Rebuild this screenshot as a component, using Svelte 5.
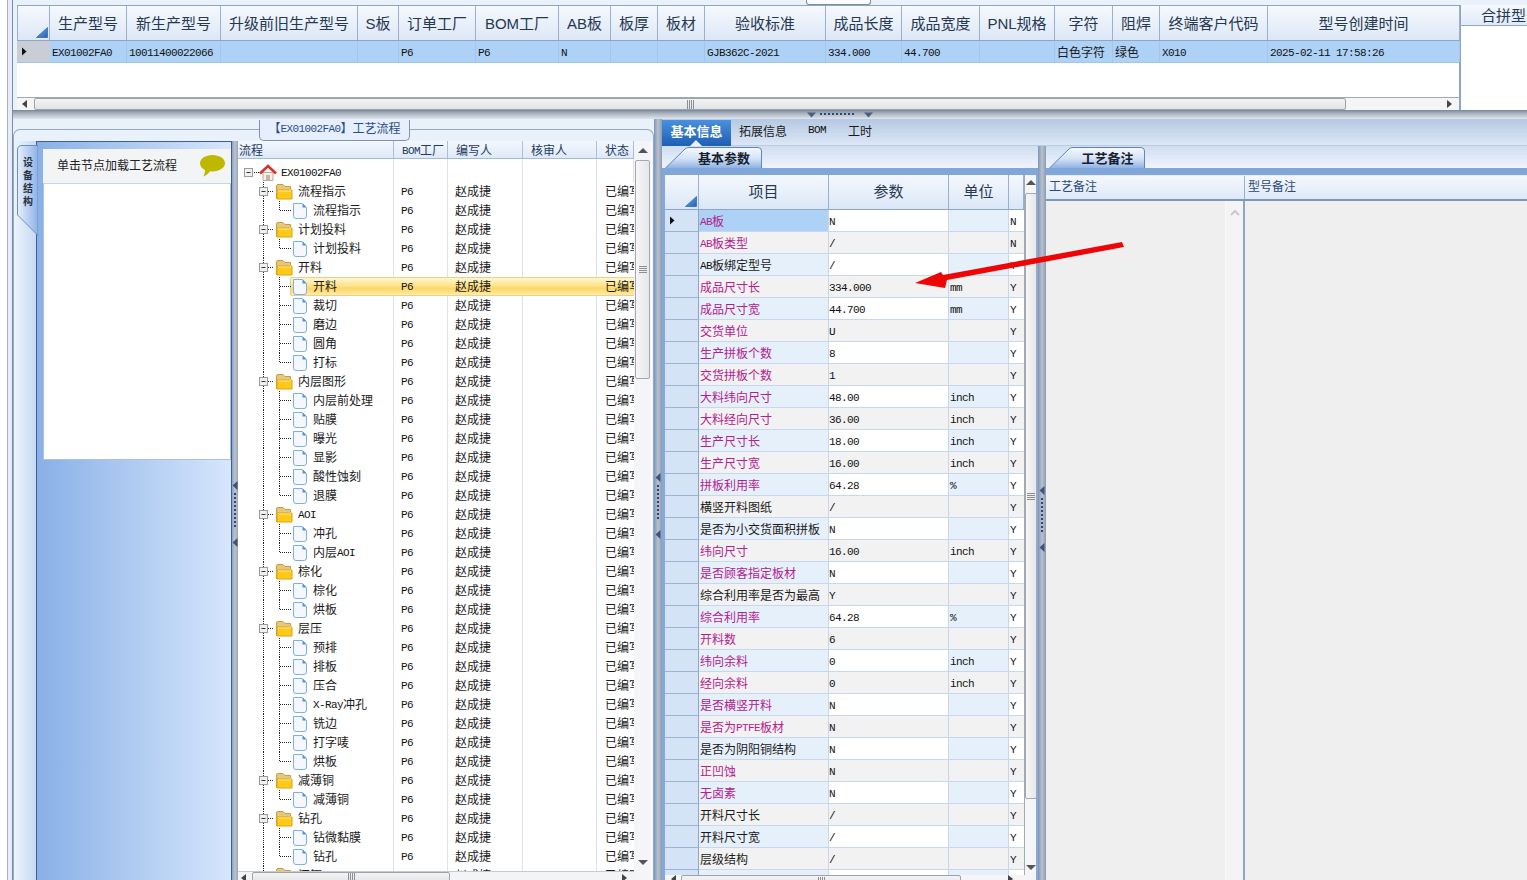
<script>
  const topCols = ['生产型号','新生产型号','升级前旧生产型号','S板','订单工厂','BOM工厂','AB板','板厚','板材','验收标准','成品长度','成品宽度','PNL规格','字符','阻焊','终端客户代码','型号创建时间'];
  const topRow = ['EX01002FA0','10011400022066','','','P6','P6','N','','','GJB362C-2021','334.000','44.700','','白色字符','绿色','X010','2025-02-11 17:58:26'];

  const treeSrc = [
    ['流程指示',['流程指示']],
    ['计划投料',['计划投料']],
    ['开料',['开料','裁切','磨边','圆角','打标']],
    ['内层图形',['内层前处理','贴膜','曝光','显影','酸性蚀刻','退膜']],
    ['AOI',['冲孔','内层AOI']],
    ['棕化',['棕化','烘板']],
    ['层压',['预排','排板','压合','X-Ray冲孔','铣边','打字唛','烘板']],
    ['减薄铜',['减薄铜']],
    ['钻孔',['钻微黏膜','钻孔']],
    ['沉铜',[]]
  ];
  const tree = [];
  for (const [folder, leaves] of treeSrc) {
    tree.push({ kind: 'f', label: folder });
    leaves.forEach((l, i) => tree.push({ kind: 'l', label: l, last: i === leaves.length - 1 }));
  }

  const params = [
    ['AB板','N','','N',1],['AB板类型','/','','N',1],['AB板绑定型号','/','','Y',0],
    ['成品尺寸长','334.000','mm','Y',1],['成品尺寸宽','44.700','mm','Y',1],['交货单位','U','','Y',1],
    ['生产拼板个数','8','','Y',1],['交货拼板个数','1','','Y',1],['大料纬向尺寸','48.00','inch','Y',1],
    ['大料经向尺寸','36.00','inch','Y',1],['生产尺寸长','18.00','inch','Y',1],['生产尺寸宽','16.00','inch','Y',1],
    ['拼板利用率','64.28','%','Y',1],['横竖开料图纸','/','','Y',0],['是否为小交货面积拼板','N','','Y',0],
    ['纬向尺寸','16.00','inch','Y',1],['是否顾客指定板材','N','','Y',1],['综合利用率是否为最高','Y','','Y',0],
    ['综合利用率','64.28','%','Y',1],['开料数','6','','Y',1],['纬向余料','0','inch','Y',1],
    ['经向余料','0','inch','Y',1],['是否横竖开料','N','','Y',1],['是否为PTFE板材','N','','Y',1],
    ['是否为阴阳铜结构','N','','Y',0],['正凹蚀','N','','Y',1],['无卤素','N','','Y',1],
    ['开料尺寸长','/','','Y',0],['开料尺寸宽','/','','Y',0],['层级结构','/','','Y',0],['','','','',0]
  ];

  const runs = (s) => (s.match(/[\x00-\x7f]+|[^\x00-\x7f]+/g) || []).map((t) => ({ t, lat: /^[\x00-\x7f]/.test(t) }));
  const dots = [0, 1, 2, 3, 4, 5, 6, 7, 8];
</script>

{#snippet txt(s)}{#each runs(s) as r}{#if r.lat}<span class="lat">{r.t}</span>{:else}{r.t}{/if}{/each}{/snippet}

{#snippet corner()}
  <svg class="corner" width="12" height="11" viewBox="0 0 12 11"><defs><linearGradient id="cg" x1="0" y1="0" x2="1" y2="1"><stop offset="0" stop-color="#7db0ea"/><stop offset="1" stop-color="#1f5fb4"/></linearGradient></defs><path d="M11.5 0.5V10.5H0.5Z" fill="url(#cg)" stroke="#2f6cb8" stroke-width="0.8"/></svg>
{/snippet}

{#snippet arrowR()}
  <svg width="6" height="9" viewBox="0 0 6 9"><path d="M1 0.5L5.5 4.5L1 8.5Z" fill="#111"/></svg>
{/snippet}

{#snippet vgrip()}
  <svg width="6" height="66" viewBox="0 0 6 66">
    <path d="M5.5 0V9L0.5 4.5Z" fill="#3f5278"/>
    {#each dots as d}<rect x="2" y={12 + d * 4} width="2" height="2" fill="#2e4778"/>{/each}
    <path d="M5.5 57V66L0.5 61.5Z" fill="#3f5278"/>
  </svg>
{/snippet}

{#snippet thumbGrip()}
  <svg width="8" height="7" viewBox="0 0 8 7"><path d="M0 .5H8M0 2.5H8M0 4.5H8M0 6.5H8" stroke="#8a8f96" stroke-width="1"/></svg>
{/snippet}

{#snippet hGrip()}
  <svg width="7" height="9" viewBox="0 0 7 9"><path d="M.5 0V9M2.5 0V9M4.5 0V9M6.5 0V9" stroke="#8a8f96" stroke-width="1"/></svg>
{/snippet}

{#snippet subtab(label, w)}
  <div class="subtab" style="width:{w}px">
    <svg class="tabshape" width={w} height="21" viewBox="0 0 {w} 21">
      <defs><linearGradient id="st" x1="0" y1="0" x2="0" y2="1"><stop offset="0" stop-color="#f6f9fe"/><stop offset="0.55" stop-color="#d4e2f6"/><stop offset="1" stop-color="#8fb2e4"/></linearGradient></defs>
      <path d="M0.5 21L20 2Q21.5 .5 24 .5H{w - 5}Q{w - 1.5} .5 {w - 1.5} 4V21" fill="url(#st)" stroke="#5f86bb"/>
    </svg>
    <span class="subtab-label">{label}</span>
  </div>
{/snippet}

<div class="app">
  <div class="frame">
    <div class="inner">
      <section class="top">
        <div class="grab"></div>
        <div class="top-grid">
          <div class="trow thead">
            <div class="tcorner">{@render corner()}</div>
            {#each topCols as c}<div class="th">{c}</div>{/each}
          </div>
          <div class="trow tdata">
            <div class="tind">{@render arrowR()}</div>
            {#each topRow as c}<div class="td">{@render txt(c)}</div>{/each}
          </div>
          <div class="top-empty"></div>
          <div class="hscroll top-h">
            <span class="arr-l"></span>
            <div class="hthumb top-thumb">{@render hGrip()}</div>
            <span class="arr-r"></span>
          </div>
        </div>
        <div class="merge"><div class="merge-h">合拼型号</div></div>
      </section>

      <div class="hsplit">
        <svg width="66" height="6" viewBox="0 0 66 6">
          <path d="M0 0.5H9L4.5 5.5Z" fill="#4b5f80"/>
          {#each dots as d}<rect x={13 + d * 4} y="1" width="2" height="2" fill="#2e4778"/>{/each}
          <path d="M57 0.5H66L61.5 5.5Z" fill="#4b5f80"/>
        </svg>
      </div>

      <section class="bottom">
        <div class="lp">
          <div class="group">
            <div class="legend">{@render txt('【EX01002FA0】工艺流程')}</div>
            <div class="group-inner">
              <div class="rail">
                <div class="vtab">
                  <svg class="vtab-shape" width="21" height="91" viewBox="0 0 21 91">
                    <defs><linearGradient id="vt" x1="0" y1="0" x2="1" y2="0"><stop offset="0" stop-color="#e6effc"/><stop offset="1" stop-color="#8db3e8"/></linearGradient></defs>
                    <path d="M21 0.5H5Q0.5 .5 .5 5V70L21 90.5Z" fill="url(#vt)" stroke="#6e8db8"/>
                  </svg>
                  <span class="vtab-text">设备结构</span>
                </div>
              </div>
              <div class="blue">
                <div class="card">
                  <div class="card-h">
                    <span class="card-t">单击节点加载工艺流程</span>
                    <svg width="25" height="22" viewBox="0 0 25 22"><path d="M12.5 0C19.4 0 25 3.6 25 8.2C25 12.8 19.4 16.4 12.5 16.4C11.6 16.4 10.7 16.3 9.9 16.2C8.4 18.6 5.8 20.8 3.2 21.6C4.4 19.8 5 17.6 5 15C1.9 13.5 0 11 0 8.2C0 3.6 5.6 0 12.5 0Z" fill="#bfb800"/></svg>
                  </div>
                  <div class="card-b"></div>
                </div>
              </div>
              <div class="vsplit split-a">{@render vgrip()}</div>
              <div class="tree">
                <div class="tree-main">
                  <div class="tree-row tree-h">
                    <div class="tcell left">流程</div>
                    <div class="tcell"><span class="lat">BOM</span>工厂</div>
                    <div class="tcell">编写人</div>
                    <div class="tcell">核审人</div>
                    <div class="tcell">状态</div>
                  </div>
                  <div class="rows">
                    <div class="tree-row spacer"><div class="c"></div><div class="c"></div><div class="c"></div><div class="c"></div><div class="c"></div></div>
                    <div class="tree-row">
                      <div class="c name">
                        <svg class="lines" width="39" height="19" viewBox="0 0 39 19">
                          <path d="M15.5 9.5H21" class="dot"/>
                          <rect x="6.5" y="5.5" width="8" height="8" class="box"/>
                          <path d="M8.5 9.5H12.5" stroke="#333"/>
                          <path d="M25 9.5H35V17.5H25Z" fill="#f4efe9" stroke="#b5aca2"/>
                          <rect x="28" y="12" width="4" height="5.5" fill="#c9b59d"/>
                          <path d="M22 10.5L30 3L38 10.5" fill="none" stroke="#d8312e" stroke-width="2.6"/>
                        </svg>
                        <span class="root-label"><span class="lat">EX01002FA0</span></span>
                      </div>
                      <div class="c"></div><div class="c"></div><div class="c"></div><div class="c"></div>
                    </div>
                    {#each tree as n, i}
                      <div class="tree-row" class:sel={i === 5}>
                        <div class="c name">
                          <svg class="lines" width="70" height="19" viewBox="0 0 70 19">
                            <path d="M25.5 0V19" class="dot"/>
                            {#if n.kind === 'f'}
                              <path d="M30 9.5H35" class="dot"/>
                              <rect x="21.5" y="5.5" width="8" height="8" class="box"/>
                              <path d="M23.5 9.5H27.5" stroke="#333"/>
                              <path d="M38.5 17V4Q38.5 2.5 40 2.5H45L47 4.5H52.5V7" fill="#e5c87c" stroke="#c79d3e"/>
                              <path d="M39 8H54V17H39Z" fill="#ffc918" stroke="#d9a41c"/>
                              <path d="M40 9H53" stroke="#ffe98a"/>
                            {:else}
                              <path d={n.last ? 'M41.5 0V9.5H53' : 'M41.5 0V19M41.5 9.5H53'} class="dot"/>
                              <path d="M55.5 2.5H64.5L68.5 6.5V15Q68.5 17.5 66 17.5H58Q55.5 17.5 55.5 15Z" fill="#f4f8fe" stroke="#7fb0e4"/>
                              <path d="M64.5 2.5V6.5H68.5Z" fill="#4f94dd"/>
                            {/if}
                          </svg>
                          <span class={n.kind === 'f' ? 'flabel' : 'llabel'}>{@render txt(n.label)}</span>
                        </div>
                        <div class="c"><span class="lat">P6</span></div>
                        <div class="c">赵成捷</div>
                        <div class="c"></div>
                        <div class="c status">已编写</div>
                      </div>
                    {/each}
                  </div>
                  <div class="hscroll tree-hs">
                    <span class="arr-l"></span>
                    <div class="hthumb tree-thumb">{@render hGrip()}</div>
                    <span class="arr-r"></span>
                  </div>
                </div>
                <div class="vscroll tree-vs">
                  <span class="arr-u"></span>
                  <div class="vthumb tree-vthumb">{@render thumbGrip()}</div>
                  <span class="arr-d"></span>
                </div>
              </div>
            </div>
          </div>
        </div>

        <div class="msplit">{@render vgrip()}</div>

        <div class="rp">
          <div class="tabs">
            <div class="tab active">基本信息</div>
            <div class="tab t2">拓展信息</div>
            <div class="tab t3"><span class="lat">BOM</span></div>
            <div class="tab t4">工时</div>
          </div>
          <div class="panes">
            <div class="pane params">
              <div class="subtabs">{@render subtab('基本参数', 98)}</div>
              <div class="bar"></div>
              <div class="pbody">
                <div class="pmain">
                  <div class="pgrid">
                    <div class="prow phead">
                      <div class="pcorner">{@render corner()}</div>
                      <div class="pth">项目</div><div class="pth">参数</div><div class="pth">单位</div><div class="pth"></div>
                    </div>
                    <div class="plist">
                      {#each params as p, i}
                        <div class="prow pr" class:odd={i % 2 === 0} class:first={i === 0}>
                          <div class="pind">{#if i === 0}{@render arrowR()}{/if}</div>
                          <div class="pc item" class:mag={p[4]}>{@render txt(p[0])}</div>
                          <div class="pc val"><span class="lat">{p[1]}</span></div>
                          <div class="pc unit"><span class="lat">{p[2]}</span></div>
                          <div class="pc flag"><span class="lat">{p[3]}</span></div>
                        </div>
                      {/each}
                    </div>
                  </div>
                  <div class="vscroll p-vs">
                    <span class="arr-u"></span>
                    <div class="vthumb p-vthumb">{@render thumbGrip()}</div>
                    <span class="arr-d"></span>
                  </div>
                </div>
                <div class="hscroll p-hs">
                  <span class="arr-l"></span>
                  <div class="hthumb p-thumb">{@render hGrip()}</div>
                  <span class="arr-r"></span>
                </div>
              </div>
            </div>
            <div class="msplit rsplit">{@render vgrip()}</div>
            <div class="pane remarks">
              <div class="subtabs st-r">{@render subtab('工艺备注', 97)}</div>
              <div class="bar"></div>
              <div class="rhead">
                <div class="rh r1">工艺备注</div>
                <div class="rh">型号备注</div>
              </div>
              <div class="rbody">
                <div class="rcol">
                  <div class="rscroll">
                    <svg width="10" height="7" viewBox="0 0 10 7"><path d="M1 6L5 2L9 6" fill="none" stroke="#c6cacf" stroke-width="2"/></svg>
                  </div>
                </div>
                <div class="rcol2"></div>
              </div>
            </div>
          </div>
        </div>
      </section>
    </div>
  </div>
  <svg class="red" width="1527" height="880" viewBox="0 0 1527 880">
    <polygon points="1122,242 1124,247 947,280 945,288 915,283 941,272 943,275" fill="#ee0505"/>
  </svg>
</div>

<style>
  * { box-sizing: border-box; }
  :global(body) { margin: 0; background: #fff; }
  .app { position: relative; width: 1527px; height: 880px; overflow: hidden; background: #fff; display: flex; font-family: "Noto Sans CJK SC", "Liberation Sans", sans-serif; font-size: 12px; color: #1a1a1a; }
  .frame { margin-left: 7px; flex: 1; min-width: 0; border-left: 1px solid #a9b2bd; background: #e4edf9; padding-left: 4px; }
  .inner { height: 880px; border-left: 1px solid #7d8ca2; display: flex; flex-direction: column; }
  .lat { font-family: "Liberation Mono", monospace; font-size: 11px; letter-spacing: -0.6px; position: relative; top: -1px; color: #111; }

  .top { position: relative; height: 111px; display: flex; padding: 5px 0 0 4px; background: #e9f1fb; border-bottom: 1px solid #7f8da1; flex: none; }
  .grab { position: absolute; left: 793px; top: 0; width: 65px; height: 5px; background: #fafcff; border: 1px solid #7f8da1; border-top: 0; border-radius: 0 0 3px 3px; }
  .top-grid { width: 1444px; display: flex; flex-direction: column; background: #fff; border-right: 2px solid #8ea5c4; border-top: 1px solid #8ea5c4; flex: none; }
  .trow { display: grid; grid-template-columns: 33px 77px 94px 137px 41px 77px 83px 52px 47px 47px 121px 76px 78px 75px 58px 47px 108px 192px; flex: none; }
  .thead { height: 35px; }
  .tcorner, .th { background: linear-gradient(#f6f9fd, #dce8f7); border-right: 1px solid #9bb0cc; border-bottom: 1px solid #8ea5c4; }
  .tcorner { display: flex; justify-content: flex-end; align-items: flex-end; padding: 0 1px 2px 0; border-left: 1px solid #9bb0cc; }
  .th { display: flex; align-items: center; justify-content: center; padding-bottom: 2px; font-size: 15px; color: #26384f; font-family: "Liberation Sans", "Noto Sans CJK SC", sans-serif; white-space: nowrap; overflow: hidden; }
  .tdata { height: 22px; background: #aed1f6; border-bottom: 1px solid #a3c5ec; }
  .tind { background: #c9ced6; display: flex; align-items: center; padding-left: 4px; }
  .td { border-right: 1px solid #a4c6ee; padding-left: 2px; line-height: 21px; white-space: nowrap; overflow: hidden; }
  .top-empty { flex: 1; }

  .hscroll { display: flex; align-items: center; background: #f5f5f5; flex: none; position: relative; }
  .top-h { height: 13px; border-top: 1px solid #a3a9b1; }
  .hthumb { height: 13px; background: linear-gradient(#f3f3f3, #e2e4e7); border: 1px solid #9da3aa; border-radius: 2px; display: flex; align-items: center; justify-content: center; flex: none; }
  .top-thumb { width: 1312px; margin-left: 7px; height: 12px; }
  .top-h .arr-r { margin-left: 101px; }
  .arr-l { width: 0; height: 0; border: 4px solid transparent; border-right: 5px solid #444; border-left: 0; margin-left: 5px; flex: none; }
  .arr-r { width: 0; height: 0; border: 4px solid transparent; border-left: 5px solid #444; border-right: 0; flex: none; }

  .merge { flex: 1; background: #fff; min-width: 0; overflow: hidden; }
  .merge-h { height: 21px; margin-top: 0; background: linear-gradient(#f6f9fd, #e0eaf8); border-bottom: 1px solid #8ea5c4; font-size: 15px; line-height: 19px; padding-left: 20px; white-space: nowrap; color: #26384f; }

  .hsplit { height: 8px; flex: none; background: linear-gradient(#8b95a2, #adb6c2 35%, #dfe5ee); display: flex; align-items: center; padding-left: 794px; }

  .bottom { flex: 1; min-height: 0; display: flex; }
  .lp { width: 641px; flex: none; padding-top: 10px; background: #e9f1fb; }
  .group { position: relative; height: 751px; border: 1px solid #96a9c2; border-bottom: 0; border-radius: 7px 7px 0 0; }
  .legend { position: absolute; left: 245px; top: -10px; width: 151px; height: 21px; background: #e6effb; border: 1px solid #7f93ae; border-top: 0; border-radius: 0 0 5px 5px; text-align: center; line-height: 15px; color: #2a4f86; z-index: 2; white-space: nowrap; }
  .legend .lat { color: #2a4f86; }
  .group-inner { padding-top: 11px; display: flex; height: 750px; }
  .rail { width: 22px; flex: none; background: linear-gradient(90deg, #edf3fc, #c6daf5); position: relative; z-index: 1; }
  .vtab { position: relative; width: 21px; height: 91px; margin: 4px 0 0 3px; display: flex; justify-content: center; }
  .vtab-shape { position: absolute; left: 0; top: 0; }
  .vtab-text { position: relative; writing-mode: vertical-rl; font-size: 10px; font-weight: 700; letter-spacing: 3px; margin-top: 12px; height: 54px; line-height: 14px; color: #2a3040; }
  .blue { width: 196px; flex: none; background: linear-gradient(90deg, #89b0e8, #d6e6fc); border: 1px solid #3f5f92; border-bottom: 0; padding: 7px 0 0 6px; }
  .card { width: 188px; }
  .card-h { height: 34px; background: #f3f4f6; display: flex; align-items: center; justify-content: space-between; padding: 0 6px 0 14px; color: #222; }
  .card-t { position: relative; top: -2px; }
  .card-b { height: 277px; background: #fff; border: 1px solid #a9c0df; border-top-color: #c6d5e8; }
  .vsplit { width: 6px; flex: none; background: linear-gradient(90deg, #8fa3c0, #b9c3d0 50%, #9aa6b6); }
  .split-a { padding-top: 340px; }

  .tree { display: flex; background: #fff; flex: none; width: 414px; }
  .tree-main { width: 396px; flex: none; display: flex; flex-direction: column; }
  .tree-row { display: grid; grid-template-columns: 156px 54px 75px 74px 37px; height: 19px; position: relative; flex: none; }
  .tree-h { height: 18px; background: linear-gradient(#f4f8fd, #dee9f8); border-bottom: 1px solid #a7bad3; color: #1f3a60; }
  .tcell { border-right: 1px solid #aebfd5; line-height: 17px; padding-left: 8px; white-space: nowrap; overflow: hidden; }
  .tcell.left { padding-left: 1px; }
  .tcell .lat { color: #1f3a60; }
  .rows { height: 712px; overflow: hidden; flex: none; }
  .spacer { height: 4px; }
  .c { border-right: 1px solid #dfe3e8; line-height: 18px; padding-left: 7px; position: relative; white-space: nowrap; overflow: hidden; z-index: 1; }
  .name { padding-left: 0; display: flex; overflow: hidden; }
  .status { padding-left: 8px; border-right: 0; }
  .lines { flex: none; display: block; }
  .root-label { padding-left: 4px; }
  .flabel { margin-left: -10px; }
  .llabel { margin-left: 5px; }
  .dot { fill: none; stroke: #222; stroke-dasharray: 1 1; shape-rendering: crispEdges; }
  .box { fill: #f0f0f0; stroke: #9a9a9a; shape-rendering: crispEdges; }
  .sel::before { content: ""; position: absolute; left: 52px; right: 0; top: 0; bottom: 0; background: linear-gradient(#fff6cf, #ffe38d 45%, #fdd766 60%, #ffeaa8); border: 1px solid #e4d28f; border-right: 0; border-radius: 2px 0 0 2px; }
  .sel .c { border-right-color: transparent; }
  .tree-hs { height: 9px; background: #f3f4f5; border-top: 1px solid #c6cbd1; padding-top: 3px; }
  .tree-hs .arr-l { margin-left: 3px; margin-top: 0; }
  .tree-thumb { width: 198px; margin-left: 6px; height: 12px; }
  .tree-hs .arr-r { margin-left: 172px; }

  .vscroll { display: flex; flex-direction: column; align-items: center; background: #f4f5f6; flex: none; }
  .arr-u { width: 0; height: 0; border: 5px solid transparent; border-bottom: 5px solid #555; border-top: 0; flex: none; }
  .arr-d { width: 0; height: 0; border: 5px solid transparent; border-top: 5px solid #555; border-bottom: 0; flex: none; }
  .vthumb { background: linear-gradient(90deg, #f6f6f7, #e6e7e9); border: 1px solid #a3a9b1; border-radius: 2px; display: flex; align-items: center; justify-content: center; flex: none; }
  .tree-vs { width: 17px; padding-top: 7px; }
  .tree-vthumb { width: 15px; height: 219px; margin-top: 7px; }
  .tree-vs .arr-d { margin-top: 481px; }

  .msplit { width: 8px; flex: none; background: linear-gradient(90deg, #7f94b4, #b8c2cf 50%, #8d9bb0); padding: 354px 0 0 1px; }
  .rsplit { padding-top: 340px; }

  .rp { flex: 1; min-width: 0; display: flex; flex-direction: column; }
  .tabs { height: 27px; flex: none; display: flex; background: linear-gradient(#b5c8e2, #dce7f6); border-bottom: 1px solid #bdcbdd; }
  .tab { display: flex; align-items: center; height: 26px; flex: none; padding-bottom: 3px; }
  .tab.active { position: relative; width: 69px; margin-top: 1px; justify-content: center; color: #fff; font-weight: 700; font-size: 13px; background: linear-gradient(#4a90dd, #1d5fb4); padding-bottom: 5px; }
  .tab.active::after { content: ""; position: absolute; left: 28px; bottom: 0; border: 6px solid transparent; border-bottom: 6px solid #eaf2fc; border-top: 0; }
  .t2 { width: 77px; padding-left: 8px; }
  .t3 { width: 40px; }
  .panes { flex: 1; min-height: 0; display: flex; }
  .pane { display: flex; flex-direction: column; min-width: 0; }
  .params { width: 376px; flex: none; }
  .remarks { flex: 1; }
  .subtabs { height: 22px; padding: 1px 0 0 3px; flex: none; background: linear-gradient(#cfdef2, #eff4fc); }
  .st-r { padding-left: 3px; }
  .subtab { position: relative; height: 21px; display: flex; align-items: center; justify-content: center; }
  .tabshape { position: absolute; left: 0; top: 0; }
  .subtab-label { position: relative; font-size: 13px; font-weight: 700; color: #16202e; padding-left: 20px; }
  .bar { height: 7px; flex: none; background: #80a6da; }
  .pbody { flex: 1; min-height: 0; display: flex; flex-direction: column; border: solid #85a9dc; border-width: 0 2px 0 3px; background: #eef1f5; }
  .pmain { display: flex; height: 700px; flex: none; }
  .pgrid { width: 359px; flex: none; background: #fff; }
  .prow { display: grid; grid-template-columns: 34px 130px 120px 60px 15px; }
  .phead { height: 35px; }
  .pcorner, .pth { background: linear-gradient(#f5f8fd, #dbe7f7); border-right: 1px solid #9bb0cc; border-bottom: 1px solid #8ea5c4; }
  .pcorner { display: flex; justify-content: flex-end; align-items: flex-end; padding: 0 1px 2px 0; }
  .pth { display: flex; align-items: center; justify-content: center; padding-bottom: 3px; font-size: 15px; color: #26384f; }
  .plist { height: 665px; overflow: hidden; }
  .pr { height: 22px; background: #f2f2f2; }
  .pind { background: #d4e3f5; border-right: 1px solid #8ea5c4; border-bottom: 1px solid #9db3cf; display: flex; align-items: center; padding-left: 4px; }
  .pc { border-right: 1px solid #c6d7ee; border-bottom: 1px solid #c6d7ee; line-height: 21px; padding-left: 1px; white-space: nowrap; overflow: hidden; }
  .val { padding-left: 0; }
  .flag { border-right: 0; }
  .odd .item, .odd .unit { background: #e6f0fb; }
  .odd .val, .odd .flag { background: #fff; }
  .first .item { background: #aed1f6; }
  .mag { color: #b2208e; }
  .mag .lat { color: #b2208e; }
  .p-vs { width: 12px; padding-top: 5px; border-left: 1px solid #a3a9b1; }
  .p-vthumb { width: 12px; height: 606px; margin-top: 8px; }
  .p-vs .arr-d { margin-top: 66px; }
  .p-hs { height: 5px; overflow: visible; align-items: flex-start; }
  .p-thumb { width: 280px; margin-left: 5px; height: 12px; }
  .p-hs .arr-l { margin-left: 6px; }
  .p-hs .arr-r { margin-left: 47px; }

  .rhead { height: 25px; flex: none; display: flex; background: linear-gradient(#f5f8fd, #dde9f8); border-bottom: 2px solid #7f97b7; margin-top: 1px; }
  .rh { padding-left: 3px; line-height: 20px; color: #2b4a78; flex: 1; }
  .r1 { flex: none; width: 199px; border-right: 1px solid #9bb0cc; }
  .rbody { flex: 1; display: flex; background: #efefef; min-height: 0; }
  .rcol { width: 199px; flex: none; display: flex; justify-content: flex-end; border-right: 2px solid #8ea5c4; }
  .rscroll { width: 18px; background: #f4f4f4; border-left: 1px solid #f8f8f8; display: flex; justify-content: center; padding-top: 8px; }
  .rcol2 { flex: 1; }

  .corner { display: block; }
  .red { position: absolute; left: 0; top: 0; pointer-events: none; z-index: 5; }
</style>
